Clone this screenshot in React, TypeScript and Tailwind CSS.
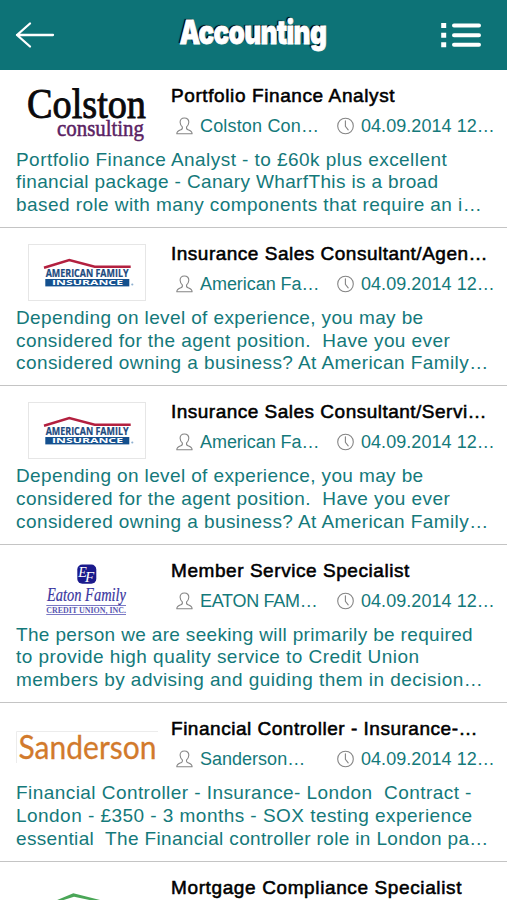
import { FC, ReactNode } from "react";

type TextType = { text: string; tracking: string };

type JobType = {
  id: number;
  logo: ReactNode;
  title: TextType;
  company?: TextType;
  date?: string;
  desc?: TextType[];
};

const ColstonLogo = () => (
  <svg width="142" height="60" viewBox="0 0 142 60">
    <g fontFamily="Liberation Serif, serif">
      <text x="11" y="33.8" fontSize="42" textLength="119" lengthAdjust="spacingAndGlyphs" fill="#0b0a0c" stroke="#0b0a0c" strokeWidth="0.9">
        Colston
      </text>
      <text x="41" y="51.5" fontSize="23" textLength="87" lengthAdjust="spacingAndGlyphs" fill="#5a2263" stroke="#5a2263" strokeWidth="0.5">
        consulting
      </text>
    </g>
  </svg>
);

const AmericanFamilyLogo = () => (
  <svg width="142" height="60" viewBox="0 0 142 60">
    <rect x="12.5" y="2.5" width="117" height="56" fill="#fff" stroke="#e6e6e6" />
    <path d="M28 25.7 L53.3 18 L78.7 24.8 H114.7" fill="none" stroke="#b3203f" strokeWidth="2.5" />
    <g fontFamily="Open Sans, sans-serif" fontWeight="700">
      <text x="29.7" y="35.4" fontSize="10" textLength="82.8" lengthAdjust="spacingAndGlyphs" fill="#1c4a80" stroke="#1c4a80" strokeWidth="0.2">
        AMERICAN FAMILY
      </text>
      <rect x="29.3" y="37" width="84" height="7.4" fill="#14508e" />
      <text x="36" y="43.2" fontSize="6.8" textLength="71" lengthAdjust="spacingAndGlyphs" fill="#fff">
        INSURANCE
      </text>
    </g>
    <circle cx="116.3" cy="42.5" r="1.1" fill="#8fb0cf" />
  </svg>
);

const EatonLogo = () => (
  <svg width="142" height="60" viewBox="0 0 142 60">
    <rect x="61.3" y="5.5" width="19" height="19.3" rx="5" fill="#1b1a8c" />
    <g fontFamily="Liberation Serif, serif">
      <g fill="#fff" fontStyle="italic">
        <text x="62.2" y="18" fontSize="14">E</text>
        <text x="69" y="22.5" fontSize="15">F</text>
      </g>
      <text x="31" y="42" fontSize="18" fontStyle="italic" textLength="79" lengthAdjust="spacingAndGlyphs" fill="#3a36a0" stroke="#3a36a0" strokeWidth="0.2">
        Eaton Family
      </text>
      <path d="M30.3 46.5 H110 M30.3 55.5 H110" stroke="#7a78c4" strokeWidth="1" />
      <text x="30.3" y="53.6" fontSize="7.6" fontWeight="700" textLength="79.7" lengthAdjust="spacingAndGlyphs" fill="#5b58b2">
        CREDIT UNION, INC.
      </text>
    </g>
  </svg>
);

const SandersonLogo = () => (
  <svg width="142" height="60" viewBox="0 0 142 60">
    <path d="M0.5 46 V14.5 H142" fill="none" stroke="#ececec" />
    <text x="2.5" y="42.3" fontFamily="Lato, sans-serif" fontSize="33" textLength="138" lengthAdjust="spacingAndGlyphs" fill="#d27a2c" stroke="#d27a2c" strokeWidth="0.3">
      Sanderson
    </text>
  </svg>
);

const RoofLogo = () => (
  <svg width="142" height="60" viewBox="0 0 142 60">
    <path d="M40 24.5 L57.3 17.2 L86 24.5 H76 L58 20.8 L46 24.5 Z" fill="#4aa657" />
  </svg>
);

const UserIcon = () => (
  <svg width="17" height="18" viewBox="0 0 17 18" fill="none" stroke="#858585" strokeWidth="1.1" strokeLinejoin="round">
    <path d="M8.4 1 C5.4 1 4 2.9 4.1 5.3 C4.2 7.6 5.2 8.9 6.3 9.9 C6.7 11.5 6.3 12.2 5 12.7 C2.4 13.5 0.9 13.9 0.8 16.7 H16.1 C16 13.9 14.5 13.5 11.9 12.7 C10.6 12.2 10.2 11.5 10.6 9.9 C11.7 8.9 12.7 7.6 12.8 5.3 C12.9 2.9 11.4 1 8.4 1 Z" />
  </svg>
);

const ClockIcon = () => (
  <svg width="17" height="18" viewBox="0 0 17 18" fill="none" stroke="#858585" strokeWidth="1.1" strokeLinecap="round">
    <circle cx="8.5" cy="9" r="7.8" />
    <path d="M8.4 3.7 V9.4 L11.2 12.8" />
  </svg>
);

const agentDesc: TextType[] = [
  { text: "Depending on level of experience, you may be", tracking: "tracking-[0.38px]" },
  { text: "considered for the agent position.\u00a0 Have you ever", tracking: "tracking-[0.41px]" },
  { text: "considered owning a business? At American Family…", tracking: "tracking-[0.42px]" },
];

const jobs: JobType[] = [
  {
    id: 1,
    logo: <ColstonLogo />,
    title: { text: "Portfolio Finance Analyst", tracking: "tracking-[0.6px]" },
    company: { text: "Colston Con…", tracking: "tracking-[0.17px]" },
    date: "04.09.2014 12…",
    desc: [
      { text: "Portfolio Finance Analyst - to £60k plus excellent", tracking: "tracking-[0.45px]" },
      { text: "financial package - Canary WharfThis is a broad", tracking: "tracking-[0.36px]" },
      { text: "based role with many components that require an i…", tracking: "tracking-[0.43px]" },
    ],
  },
  {
    id: 2,
    logo: <AmericanFamilyLogo />,
    title: { text: "Insurance Sales Consultant/Agen…", tracking: "tracking-[0.5px]" },
    company: { text: "American Fa…", tracking: "tracking-[-0.05px]" },
    date: "04.09.2014 12…",
    desc: agentDesc,
  },
  {
    id: 3,
    logo: <AmericanFamilyLogo />,
    title: { text: "Insurance Sales Consultant/Servi…", tracking: "tracking-[0.49px]" },
    company: { text: "American Fa…", tracking: "tracking-[-0.05px]" },
    date: "04.09.2014 12…",
    desc: agentDesc,
  },
  {
    id: 4,
    logo: <EatonLogo />,
    title: { text: "Member Service Specialist", tracking: "tracking-[0.56px]" },
    company: { text: "EATON FAM…", tracking: "tracking-[-0.3px]" },
    date: "04.09.2014 12…",
    desc: [
      { text: "The person we are seeking will primarily be required", tracking: "tracking-[0.34px]" },
      { text: "to provide high quality service to Credit Union", tracking: "tracking-[0.45px]" },
      { text: "members by advising and guiding them in decision…", tracking: "tracking-[0.46px]" },
    ],
  },
  {
    id: 5,
    logo: <SandersonLogo />,
    title: { text: "Financial Controller - Insurance-…", tracking: "tracking-[0.52px]" },
    company: { text: "Sanderson…", tracking: "tracking-[0.01px]" },
    date: "04.09.2014 12…",
    desc: [
      { text: "Financial Controller - Insurance- London\u00a0 Contract -", tracking: "tracking-[0.44px]" },
      { text: "London - £350 - 3 months - SOX testing experience", tracking: "tracking-[0.46px]" },
      { text: "essential\u00a0 The Financial controller role in London pa…", tracking: "tracking-[0.35px]" },
    ],
  },
  {
    id: 6,
    logo: <RoofLogo />,
    title: { text: "Mortgage Compliance Specialist", tracking: "tracking-[0.62px]" },
  },
];

const Job: FC<{ job: JobType }> = ({ job }) => {
  return (
    <li className="h-[158.4px] shrink-0 border-b border-[#c4c4c4] px-4 pt-3.5 whitespace-nowrap">
      <div className="flex h-[65px] gap-[13px]">
        <div className="w-[142px] shrink-0">{job.logo}</div>
        <div className="flex flex-col gap-1.5 leading-6">
          <h2 className={`text-[19px] leading-6 text-black [-webkit-text-stroke:0.55px_#000] ${job.title.tracking}`}>
            {job.title.text}
          </h2>
          {job.company && (
            <div className="flex items-center pl-[5px] text-[18px] text-[#14797a]">
              <UserIcon />
              <span className={`ml-[7px] w-[137px] ${job.company.tracking}`}>{job.company.text}</span>
              <ClockIcon />
              <span className="ml-[7px] tracking-[0.05px]">{job.date}</span>
            </div>
          )}
        </div>
      </div>
      {job.desc && (
        <div className="text-[19px] leading-[22.7px] text-[#14797a]">
          {job.desc.map((line) => (
            <div key={line.text} className={line.tracking}>
              {line.text}
            </div>
          ))}
        </div>
      )}
    </li>
  );
};

const Header = () => (
  <header className="flex h-[69.6px] shrink-0 items-center justify-between bg-[#0d7377] pr-[25px] pl-[15px]">
    <svg width="40" height="28" viewBox="0 0 40 28" fill="none" stroke="#fff" strokeWidth="2.3" strokeLinecap="round" strokeLinejoin="round">
      <path d="M2 14 H38 M15 2.5 L2 14 L15 25.5" />
    </svg>
    <h1 className="mb-1.5 ml-2.5 origin-center scale-x-[0.79] font-['Inter',sans-serif] text-[33px] leading-10 font-black tracking-tight text-white [-webkit-text-stroke:0.8px_#fff] [text-shadow:-2px_-1px_1px_#000]">
      Accounting
    </h1>
    <svg width="42" height="28" viewBox="0 0 42 28" fill="#fff">
      <path d="M1.2 2 h5 v5 h-5 z M1.2 11.7 h5 v5 h-5 z M1.2 21.3 h5 v5 h-5 z" />
      <path d="M14 4.5 H39 M14 14.2 H39 M14 23.8 H39" stroke="#fff" strokeWidth="4" strokeLinecap="round" />
    </svg>
  </header>
);

export default function App() {
  return (
    <div className="flex h-[900px] w-[507px] flex-col overflow-hidden bg-white font-['Liberation_Sans',Arial,sans-serif]">
      <Header />
      <ul className="flex flex-col">
        {jobs.map((job) => (
          <Job key={job.id} job={job} />
        ))}
      </ul>
    </div>
  );
}
